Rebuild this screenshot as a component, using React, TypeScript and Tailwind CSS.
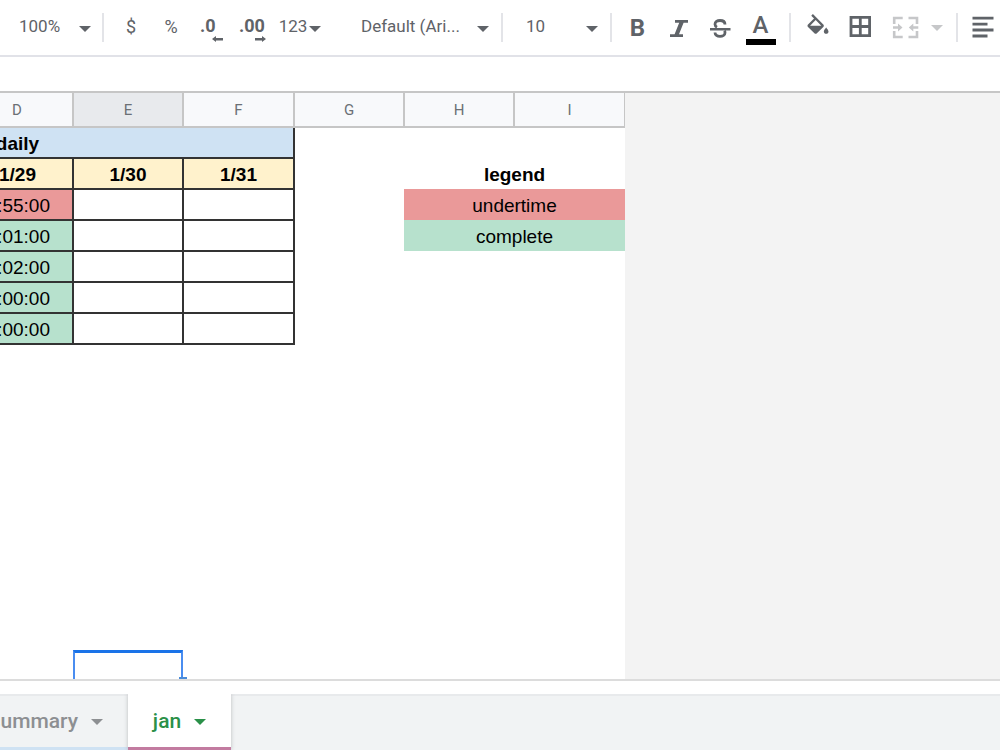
import React, { useState } from 'react';

const columns = ['D', 'E', 'F', 'G', 'H', 'I'];

const rows = [
  { time: ':55:00', complete: false, legend: 'undertime' },
  { time: ':01:00', complete: true, legend: 'complete' },
  { time: ':02:00', complete: true },
  { time: ':00:00', complete: true },
  { time: ':00:00', complete: true },
];

const legendColors: Record<string, string> = {
  undertime: 'bg-[#ea9999]',
  complete: 'bg-[#b7e1cd]',
};

function Caret({ className = '' }: { className?: string }) {
  return (
    <svg viewBox="0 0 12 6" className={`h-[6px] w-[12px] shrink-0 fill-current ${className}`} aria-hidden="true">
      <path d="M0 0h12L6 6z" />
    </svg>
  );
}

function Separator({ className = '' }: { className?: string }) {
  return <div className={`h-[29px] w-[2px] shrink-0 bg-[#e3e4e8] ${className}`} />;
}

interface PickerProps {
  label: string;
  options: string[];
  className?: string;
}

function Picker({ label, options, className = '' }: PickerProps) {
  const [value, setValue] = useState(options[0]);
  return (
    <div className={`grid shrink-0 items-center ${className}`}>
      <select
        aria-label={label}
        className="col-start-1 row-start-1 w-full appearance-none bg-transparent pb-[3px] leading-6 outline-none"
        value={value}
        onChange={(e) => setValue(e.target.value)}
      >
        {options.map((option) => (
          <option key={option}>{option}</option>
        ))}
      </select>
      <Caret className="pointer-events-none col-start-1 row-start-1 mt-[2px] justify-self-end" />
    </div>
  );
}

interface ToolButtonProps {
  label: string;
  className?: string;
  children: React.ReactNode;
}

function ToolButton({ label, className = 'w-[41px]', children }: ToolButtonProps) {
  return (
    <button
      type="button"
      aria-label={label}
      title={label}
      className={`flex h-[41px] shrink-0 items-center justify-center ${className}`}
    >
      {children}
    </button>
  );
}

function Icon({ children }: { children: React.ReactNode }) {
  return (
    <svg viewBox="0 0 30 31" className="h-[31px] w-[30px] shrink-0 fill-current" aria-hidden="true">
      {children}
    </svg>
  );
}

function Toolbar() {
  return (
    <div
      role="toolbar"
      className="flex h-[57px] shrink-0 items-center overflow-hidden border-b-2 border-[#e1e2e8] pl-[19px] font-[Roboto,sans-serif] text-[17px] text-[#5f6368]"
    >
      <Picker label="Zoom" options={['100%', '50%', '75%', '125%', '150%']} className="w-[72px]" />
      <Separator className="ml-[11px] mr-[7px]" />
      <ToolButton label="Format as currency" className="w-10 pb-[3px] text-[18px]">$</ToolButton>
      <ToolButton label="Format as percent" className="w-10 pb-[3px] text-[18px]">%</ToolButton>
      <ToolButton label="Decrease decimal places" className="w-[41px] pt-[2px] text-[18px]">
        <span className="flex w-[23px] flex-col">
          <span className="text-left font-bold leading-5">.0</span>
          <svg viewBox="0 0 11 6" className="h-[6px] w-[11px] self-end fill-current" aria-hidden="true">
            <path d="M0 3l4-3v2h7v2.400H4V6z" />
          </svg>
        </span>
      </ToolButton>
      <ToolButton label="Increase decimal places" className="w-[41px] pt-[2px] text-[18px]">
        <span className="flex w-[27px] flex-col">
          <span className="text-left font-bold leading-5">.00</span>
          <svg viewBox="0 0 11 6" className="h-[6px] w-[11px] self-end fill-current" aria-hidden="true">
            <path d="M11 3L7 0v2H0v2.400h7V6z" />
          </svg>
        </span>
      </ToolButton>
      <ToolButton label="More formats" className="w-[54px] gap-[2px]">
        <span className="pb-[2px]">123</span>
        <Caret className="mt-[2px]" />
      </ToolButton>
      <Picker label="Font" options={['Default (Ari...', 'Calibri', 'Georgia', 'Verdana']} className="ml-[34px] w-[128px]" />
      <Separator className="ml-[12px] mr-[23px]" />
      <Picker label="Font size" options={['10', '11', '12', '14', '18']} className="w-[72px]" />
      <Separator className="ml-[12px] mr-[5px]" />
      <ToolButton label="Bold">
        <span className="text-[24px] font-bold">B</span>
      </ToolButton>
      <ToolButton label="Italic">
        <Icon>
          <path d="M11 8h13v2.800h-4.400L15 22.200h4V25H6v-2.800h4.600L15.200 10.800H11z" />
        </Icon>
      </ToolButton>
      <ToolButton label="Strikethrough">
        <Icon>
          <path
            d="M20 12.500c0-2.600-2.200-4-5-4s-5 1.400-5 3.800c0 1.500.8 2.400 2 3M10 20.500c0 2.400 2.200 3.800 5 3.800s5-1.400 5-3.600c0-.9-.2-1.500-.6-2"
            fill="none"
            stroke="currentColor"
            strokeWidth="2.800"
          />
          <path d="M5 16h20.500v2.500H5z" />
        </Icon>
      </ToolButton>
      <ToolButton label="Text color">
        <span className="flex w-[30px] flex-col items-center pt-[3px]">
          <span className="pb-[2px] text-[24px] font-medium leading-6">A</span>
          <span className="h-[6px] w-full bg-black" />
        </span>
      </ToolButton>
      <Separator className="ml-[8px] mr-[6px]" />
      <ToolButton label="Fill color" className="w-[42px]">
        <svg viewBox="0 0 24 24" className="h-[28px] w-[28px] shrink-0 fill-current" aria-hidden="true">
          <path d="M16.560 8.940L7.620 0 6.210 1.410l2.380 2.380-5.150 5.150c-.59.59-.59 1.540 0 2.120l5.500 5.500c.29.29.68.44 1.060.44s.77-.15 1.060-.44l5.500-5.500c.59-.58.59-1.530 0-2.120zM5.210 10L10 5.210 14.790 10H5.210zM19 11.500s-2 2.170-2 3.500c0 1.100.9 2 2 2s2-.9 2-2c0-1.330-2-3.500-2-3.500z" />
        </svg>
      </ToolButton>
      <ToolButton label="Borders" className="w-[42px]">
        <Icon>
          <path d="M6 5.300h18.600v18.400H6zM15.300 5v19M6 14.500h19" fill="none" stroke="currentColor" strokeWidth="2.800" />
        </Icon>
      </ToolButton>
      <ToolButton label="Merge cells" className="gap-[11px] pl-[9px] text-[#c6c7c9]">
        <Icon>
          <path
            d="M4.200 12V6h8.500M18.500 6H27v6M4.200 19v6h8.500M18.500 25H27v-6"
            fill="none"
            stroke="currentColor"
            strokeWidth="2.600"
          />
          <path d="M3 14.300h5V11.500l4.500 4L8 19.500v-2.800H3zM28.300 14.300h-5V11.500l-4.500 4 4.500 4v-2.800h5z" />
        </Icon>
        <Caret />
      </ToolButton>
      <Separator className="ml-[13px] mr-1" />
      <ToolButton label="Align left">
        <Icon>
          <path d="M4.500 4.700h21v2.900h-21zM4.500 10.700h15v2.900h-15zM4.500 16.600h21v2.900h-21zM4.500 22.500h15v2.900h-15z" />
        </Icon>
      </ToolButton>
    </div>
  );
}

function Sheet() {
  const line = 'border-2 border-[#333]';
  return (
    <main className="flex min-h-0 flex-1 overflow-hidden border-t-2 border-[#c6c6c6] bg-[#f3f3f3]">
      <div className="flex w-[625px] shrink-0 flex-col overflow-hidden bg-white">
        <table className="-ml-[39px] w-[664px] table-fixed border-collapse text-center font-['Liberation_Sans',Arial,sans-serif] text-[19px] leading-6 text-black">
          <colgroup>
            <col className="w-[111px]" />
            <col className="w-[110px]" />
            <col className="w-[111px]" />
            <col className="w-[110px]" />
            <col className="w-[110px]" />
            <col className="w-[111px]" />
          </colgroup>
          <thead>
            <tr className="h-[34px] font-[Roboto,sans-serif] text-[15px] text-[#6b7075]">
              {columns.map((column) => (
                <th
                  key={column}
                  scope="col"
                  className={`border-b-2 border-r-2 border-[#c6c6c6] p-0 pt-[1px] font-normal ${
                    column === 'E' ? 'bg-[#e8eaed]' : 'bg-[#f8f9fb]'
                  }`}
                >
                  {column}
                </th>
              ))}
            </tr>
          </thead>
          <tbody>
            <tr className="h-[31px]">
              <th colSpan={3} className="border-b-2 border-r-2 border-[#333] bg-[#cfe2f3] p-0">
                <span className="block w-[111px] pt-[2px]">daily</span>
              </th>
              <td colSpan={3} />
            </tr>
            <tr className="h-[31px]">
              {['1/29', '1/30', '1/31'].map((day) => (
                <th key={day} className={`bg-[#fff2cc] p-0 pt-[2px] ${line}`}>
                  {day}
                </th>
              ))}
              <td />
              <th colSpan={2} className="p-0 pt-[2px]">
                legend
              </th>
            </tr>
            {rows.map((row, index) => (
              <tr key={index} className="h-[31px]">
                <td className={`p-0 pr-[22px] pt-[2px] text-right ${line} ${row.complete ? 'bg-[#b7e1cd]' : 'bg-[#ea9999]'}`}>
                  {row.time}
                </td>
                <td className={line} />
                <td className={line} />
                <td />
                <td colSpan={2} className={`p-0 pt-[2px] ${row.legend ? legendColors[row.legend] : ''}`}>
                  {row.legend}
                </td>
              </tr>
            ))}
          </tbody>
        </table>
        {/* selected cell, cut off by the bottom of the grid */}
        <div className="ml-[73px] mt-auto flex w-[114px]">
          <div className="h-[29px] w-[110px] border-x-2 border-t-[3px] border-x-[#4a8df0] border-t-[#1a73e8]" />
          <div className="-ml-[4px] h-[2px] w-[8px] self-end bg-[#4a8bd8]" />
        </div>
      </div>
    </main>
  );
}

function SheetTabs() {
  return (
    <footer className="shrink-0 border-t-2 border-[#dcdcdc] bg-white pt-[13px] font-[Roboto,sans-serif] text-[21px] font-medium">
      <nav className="flex h-14 overflow-hidden bg-[#f1f3f4] shadow-[inset_0_2px_0_#e8eaec]">
        <button
          type="button"
          className="flex w-[128px] shrink-0 items-center justify-end gap-[13px] border-b-[3px] border-[#cfe2f3] pr-[25px] pt-[2px] text-[#8d8f92]"
        >
          summary
          <Caret />
        </button>
        <button
          type="button"
          aria-current="page"
          className="flex w-[103px] shrink-0 items-center justify-center gap-[13px] border-b-[3px] border-[#c27ba0] bg-white pt-[2px] text-[#2a9048] shadow-[0_0_4px_#b8babd]"
        >
          jan
          <Caret />
        </button>
      </nav>
    </footer>
  );
}

export default function App() {
  return (
    <div className="flex h-screen flex-col overflow-hidden bg-white">
      <Toolbar />
      <input
        type="text"
        aria-label="Formula"
        className="h-[34px] w-full shrink-0 px-4 font-[Roboto,sans-serif] text-[18px] outline-none"
      />
      <Sheet />
      <SheetTabs />
    </div>
  );
}
